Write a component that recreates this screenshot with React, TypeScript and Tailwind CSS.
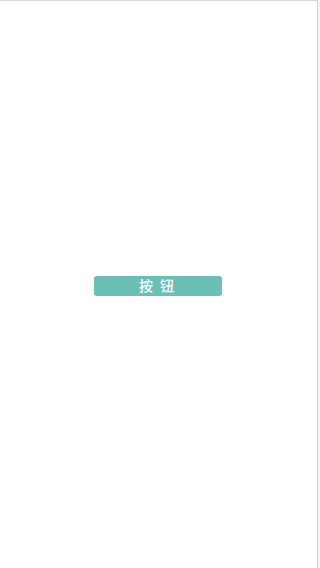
export default function App() {
  return (
    <div className="flex h-[568px] w-[320px] bg-white">
      <div className="flex h-full w-[318px] items-center justify-center border-t border-r border-[#d6d6d6] bg-white">
        <button
          type="button"
          className="mt-[2px] mr-[2px] h-5 w-32 rounded-[3px] bg-[#6bbfb6] pb-[2px] text-[14px] leading-[18px] font-medium tracking-[2px] text-white"
          style={{ fontFamily: '"Noto Sans CJK SC", sans-serif' }}
        >
          按 钮
        </button>
      </div>
      <div className="h-full w-[2px] bg-[#f2f2f2]" />
    </div>
  );
}
